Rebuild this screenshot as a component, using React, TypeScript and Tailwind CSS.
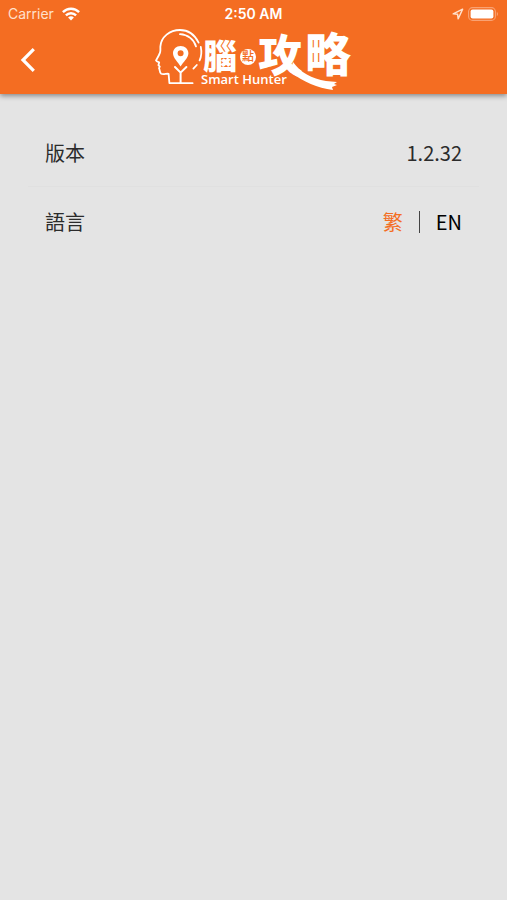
import { useState } from "react";

function WifiIcon() {
  return (
    <svg width="18" height="14" viewBox="0 0 18 14" fill="none" aria-hidden="true">
      <g stroke="#fff" strokeWidth="2.4">
        <path d="M0.9 5.2C5.4 0.6 12.6 0.6 17.1 5.2" />
        <path d="M3.9 8.4C6.8 5.5 11.2 5.5 14.1 8.4" />
      </g>
      <path d="M6.1 10.4C7.8 8.9 10.2 8.9 11.9 10.4L9 13.4Z" fill="#fff" />
    </svg>
  );
}

function LocationIcon() {
  return (
    <svg width="12" height="12" viewBox="0 0 12 12" fill="none" aria-hidden="true">
      <path
        d="M10.6 1.2L1.2 5.8L5.6 6.3L6.2 10.8Z"
        stroke="#ffe0cc"
        strokeWidth="1.5"
        strokeLinejoin="round"
      />
    </svg>
  );
}

function BatteryIcon() {
  return (
    <svg width="31" height="14" viewBox="0 0 31 14" fill="none" aria-hidden="true">
      <rect x="0.6" y="0.6" width="26.8" height="12.8" rx="4" stroke="#f9a273" strokeWidth="1.1" />
      <rect x="2.6" y="2.4" width="22.8" height="9.2" rx="2" fill="#fff" />
      <path d="M28.8 4.8C30.4 5.6 30.4 8.4 28.8 9.2Z" fill="#f9a273" />
    </svg>
  );
}

function Logo() {
  return (
    <svg
      width="200"
      height="66"
      viewBox="0 0 200 66"
      fill="none"
      role="img"
      aria-label="Smart Hunter"
      className="overflow-visible"
    >
      {/* head */}
      <g stroke="#fff" strokeWidth="1.8" strokeLinejoin="round" strokeLinecap="round">
        <path d="M44.6 14.6C40.5 6.5 33.8 2 26 2C15.6 2 7.2 9 6.4 18.4C6.2 21 6.8 22.2 6 24.6C5 27.6 3.2 30.4 2 32.4C2.6 33.8 4 34 5.2 34.4L4.4 37.2L5.8 38.6L5 40.2C6.2 42 5.2 44.6 7.2 45.8C9.4 46.8 12.4 45.4 14.6 45.8L15.4 55.2H38.6" />
        <path d="M26 6.2C34 6.6 40 11.6 42 18.4" />
        <path d="M46.8 19C48 25 47.2 29 45.6 32.4M42.8 37L39.4 40.6" />
        <path d="M26.6 55V44.6L21 39M26.6 44.6L32.4 39" strokeWidth="2" />
      </g>
      {/* pin */}
      <path
        d="M26.6 18C22.2 18 19 21.2 19 25.2C19 30.4 24.2 33.8 26.6 38.6C29 33.8 34.4 30.4 34.4 25.2C34.4 21.2 31 18 26.6 18ZM26.6 22.2A3 3 0 1 1 26.6 28.2A3 3 0 1 1 26.6 22.2Z"
        fill="#fff"
        fillRule="evenodd"
      />
      <g fill="#fff" className="font-['Noto_Sans_CJK_TC',sans-serif] font-black">
        <text x="49" y="41" fontSize="34">腦</text>
        <circle cx="94" cy="29" r="8" />
        <text x="88" y="33" fontSize="12" fill="#f46d22" className="font-medium">點</text>
        <text x="104" y="44" fontSize="44">攻</text>
        <text x="151" y="43" fontSize="46">略</text>
      </g>
      {/* brush tail */}
      <path
        d="M139 34C146 44 158 51 172 53L183 54L180 56L183 57L178 59L179 62C163 60 150 54 136 44Z"
        fill="#fff"
      />
      <text
        x="47"
        y="56"
        fontSize="13"
        fill="#fff"
        className="font-['Open_Sans',sans-serif] font-semibold"
      >
        Smart Hunter
      </text>
    </svg>
  );
}

function StatusBar() {
  return (
    <div className="grid h-7 grid-cols-3 items-center px-2 font-[Inter,sans-serif] text-sm text-white">
      <div className="flex items-center gap-2 text-[#ffe0cc]">
        <span>Carrier</span>
        <WifiIcon />
      </div>
      <span className="text-center font-semibold">2:50 AM</span>
      <div className="flex items-center justify-end gap-1">
        <LocationIcon />
        <BatteryIcon />
      </div>
    </div>
  );
}

export default function App() {
  const [lang, setLang] = useState("zh");

  return (
    <div className="min-h-screen bg-[#e4e4e4] font-['Noto_Sans_CJK_TC',sans-serif] text-[#2b2b2b]">
      <header className="bg-[#f46d22] shadow-[0_2px_5px_rgba(0,0,0,0.4)]">
        <StatusBar />
        <div className="grid h-[66px] grid-cols-[1fr_auto_1fr] items-center">
          <button type="button" aria-label="Back" className="ml-4 w-6">
            <svg width="24" height="26" viewBox="0 0 24 26" fill="none">
              <path d="M17.8 1.2L7 12L17.8 22.8" stroke="#fff" strokeWidth="3.2" />
            </svg>
          </button>
          <Logo />
        </div>
      </header>

      <main className="px-7 pt-6">
        <div className="flex h-[69px] items-center justify-between border-b border-[#e0e0e0] px-[17px] pt-0.5 text-xl">
          <span>版本</span>
          <span>1.2.32</span>
        </div>
        <div className="flex h-[70px] items-center justify-between px-[17px] text-xl">
          <span>語言</span>
          <div className="flex items-center gap-4">
            <button
              type="button"
              onClick={() => setLang("zh")}
              className={lang === "zh" ? "text-[#f46d22]" : "text-black"}
            >
              繁
            </button>
            <span className="h-[22px] w-px bg-[#444444]" />
            <button
              type="button"
              onClick={() => setLang("en")}
              className={lang === "en" ? "text-[#f46d22]" : "text-black"}
            >
              EN
            </button>
          </div>
        </div>
      </main>
    </div>
  );
}
